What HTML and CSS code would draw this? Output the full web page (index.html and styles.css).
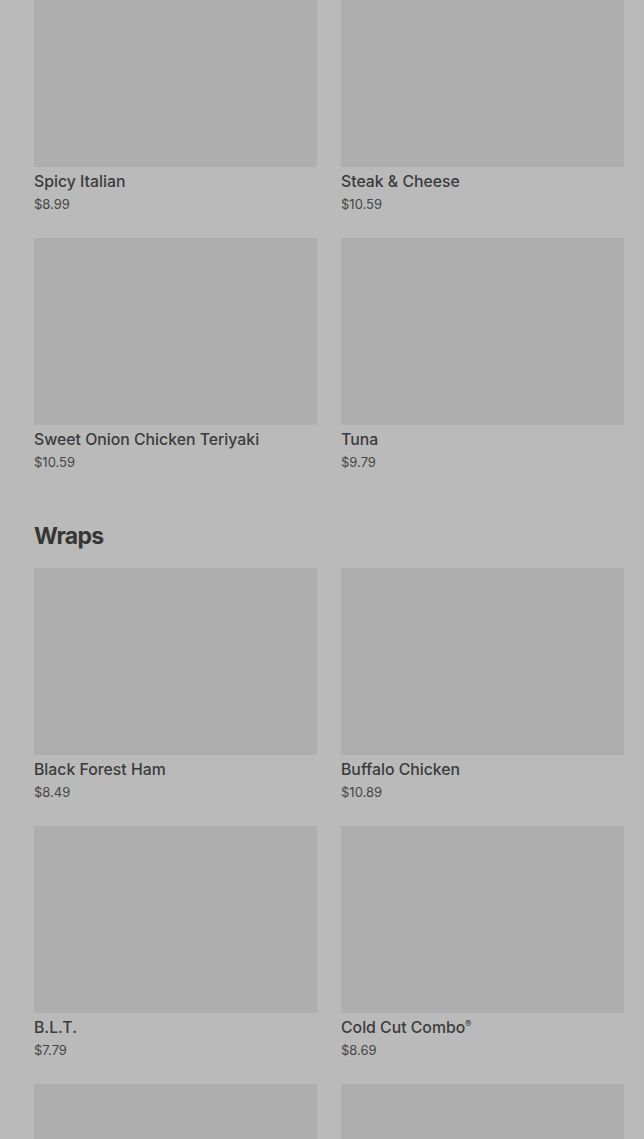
FILE: index.html
```html
<!DOCTYPE html>
<html lang="en">
<head>
<meta charset="utf-8">
<title>Menu</title>
<link rel="stylesheet" href="styles.css">
</head>
<body>
<main class="menu">
  <section class="section">
    <div class="grid">
      <article class="card"><div class="thumb"></div><div class="info"><h3 class="name">Spicy Italian</h3><p class="price">$8.99</p></div></article>
      <article class="card"><div class="thumb"></div><div class="info"><h3 class="name">Steak &amp; Cheese</h3><p class="price">$10.59</p></div></article>
      <article class="card"><div class="thumb"></div><div class="info"><h3 class="name">Sweet Onion Chicken Teriyaki</h3><p class="price">$10.59</p></div></article>
      <article class="card"><div class="thumb"></div><div class="info"><h3 class="name">Tuna</h3><p class="price">$9.79</p></div></article>
    </div>
  </section>
  <section class="section">
    <h2 class="heading">Wraps</h2>
    <div class="grid">
      <article class="card"><div class="thumb"></div><div class="info"><h3 class="name">Black Forest Ham</h3><p class="price">$8.49</p></div></article>
      <article class="card"><div class="thumb"></div><div class="info"><h3 class="name">Buffalo Chicken</h3><p class="price">$10.89</p></div></article>
      <article class="card"><div class="thumb"></div><div class="info"><h3 class="name">B.L.T.</h3><p class="price">$7.79</p></div></article>
      <article class="card"><div class="thumb"></div><div class="info"><h3 class="name">Cold Cut Combo<sup>®</sup></h3><p class="price">$8.69</p></div></article>
      <article class="card"><div class="thumb"></div></article>
      <article class="card"><div class="thumb"></div></article>
    </div>
  </section>
</main>
</body>
</html>
```

FILE: styles.css
```css
html, body {
  margin: 0;
  padding: 0;
  background: #bababa;
  overflow: hidden;
}
body {
  font-family: Inter, "Liberation Sans", sans-serif;
  color: #3a3a3a;
}
.menu {
  margin-top: -20px;
  padding: 0 20px 0 34px;
}
.section + .section {
  margin-top: 50px;
}
.heading {
  margin: 0 0 18px;
  font-size: 23px;
  line-height: 28px;
  font-weight: 700;
  letter-spacing: -0.7px;
  color: #363636;
}
.grid {
  display: grid;
  grid-template-columns: 1fr 1fr;
  column-gap: 24px;
  row-gap: 24px;
}
.card {
  display: flex;
  flex-direction: column;
}
.thumb {
  height: 187px;
  background: #aeaeae;
}
.info {
  height: 47px;
  padding-top: 5px;
  box-sizing: border-box;
}
.name {
  margin: 0;
  font-size: 15.8px;
  line-height: 20px;
  font-weight: 500;
  color: #3b3b3b;
}
.name sup {
  font-size: 9px;
  vertical-align: 6px;
  line-height: 0;
}
.price {
  margin: 4px 0 0;
  font-size: 13px;
  line-height: 17px;
  color: #464646;
}
```
